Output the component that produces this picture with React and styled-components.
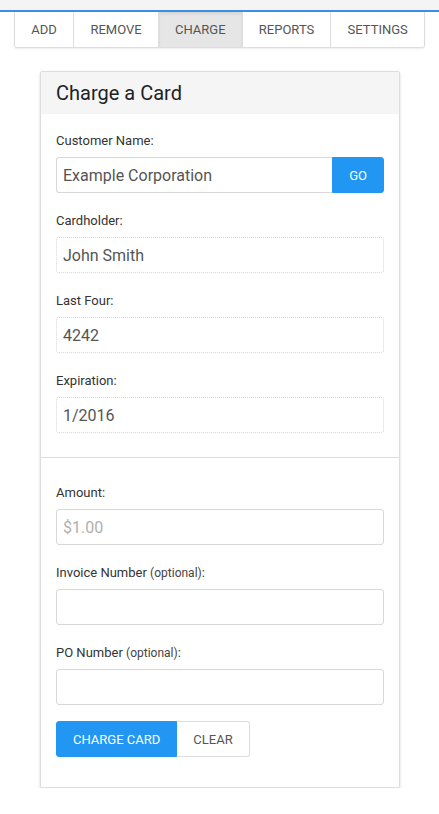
import React from 'react';
import styled, { createGlobalStyle } from 'styled-components';

const Global = createGlobalStyle`
  body {
    margin: 0;
    background: #fff;
    font-family: Roboto, "Liberation Sans", sans-serif;
    color: #333;
  }
`;

const TopBar = styled.div`
  height: 10px;
  background: #f4f4f4;
  border-bottom: 2px solid #3a8ee6;
`;

const Tabs = styled.nav`
  display: flex;
  margin: 0 14px;
  border: 1px solid #ddd;
  border-top: none;
  border-radius: 0 0 3px 3px;
  box-shadow: 0 1px 2px rgba(0, 0, 0, 0.08);
  overflow: hidden;
`;

const Tab = styled.div`
  flex: ${p => p.grow};
  height: 35px;
  display: flex;
  align-items: center;
  justify-content: center;
  font-size: 13px;
  color: #555;
  text-transform: uppercase;
  border-left: ${p => (p.first ? 'none' : '1px solid #ddd')};
  background: ${p => (p.active ? '#e6e6e6' : '#fff')};
  box-shadow: ${p => (p.active ? 'inset 0 2px 3px rgba(0,0,0,0.08)' : 'none')};
`;

const Card = styled.section`
  margin: 23px 39px 0 40px;
  border: 1px solid #ddd;
  border-radius: 2px;
  box-shadow: 0 1px 3px rgba(0, 0, 0, 0.15);
  background: #fff;
`;

const CardHeader = styled.h2`
  margin: 0;
  height: 42px;
  padding: 0 15px;
  display: flex;
  align-items: center;
  background: #f5f5f5;
  font-size: 20px;
  font-weight: 400;
  color: #222;
`;

const Section = styled.div`
  padding: ${p => p.pad};
  display: flex;
  flex-direction: column;
  gap: 20px;
`;

const Divider = styled.hr`
  margin: 0;
  border: none;
  border-top: 1px solid #ddd;
`;

const Field = styled.div`
  display: flex;
  flex-direction: column;
  gap: 9px;
`;

const Label = styled.label`
  font-size: 13px;
  line-height: 15px;
  height: 15px;
  color: #333;

  small {
    font-size: 12px;
    line-height: 15px;
    color: #444;
  }
`;

const InputRow = styled.div`
  display: flex;
`;

const Input = styled.input`
  flex: ${p => (p.joined ? '1 1 auto' : 'none')};
  min-width: 0;
  width: ${p => (p.joined ? 'auto' : '100%')};
  height: 36px;
  box-sizing: border-box;
  padding: 0 6px;
  border: 1px ${p => (p.readOnly ? 'dotted' : 'solid')} #d8d8d8;
  border-radius: ${p => (p.joined ? '3px 0 0 3px' : '3px')};
  border-right-width: ${p => (p.joined ? '0' : '1px')};
  font-family: Roboto, "Liberation Sans", sans-serif;
  font-size: 16px;
  color: #555;
  background: #fff;
  outline: none;

  &::placeholder {
    color: #b0b0b0;
  }
`;

const Button = styled.button`
  height: 36px;
  padding: 0 ${p => p.px}px;
  font-family: Roboto, "Liberation Sans", sans-serif;
  font-size: 13px;
  text-transform: uppercase;
  cursor: pointer;
  border: 1px solid ${p => (p.primary ? '#2196f3' : '#ddd')};
  border-left-width: ${p => (p.joinedLeft ? '0' : '1px')};
  background: ${p => (p.primary ? '#2196f3' : '#fff')};
  color: ${p => (p.primary ? '#fff' : '#555')};
  border-radius: ${p => p.radius};
`;

const Actions = styled.div`
  display: flex;
  margin-top: -4px;
`;

function App() {
  const tabs = [
    ['Add', 59],
    ['Remove', 85],
    ['Charge', 84],
    ['Reports', 89],
    ['Settings', 94],
  ];
  return (
    <>
      <Global />
      <TopBar />
      <Tabs>
        {tabs.map(([t, w], i) => (
          <Tab key={t} grow={w} first={i === 0} active={t === 'Charge'}>{t}</Tab>
        ))}
      </Tabs>
      <Card>
        <CardHeader>Charge a Card</CardHeader>
        <Section pad="19px 15px 24px">
          <Field>
            <Label>Customer Name:</Label>
            <InputRow>
              <Input joined defaultValue="Example Corporation" />
              <Button primary px={16} radius="0 3px 3px 0">Go</Button>
            </InputRow>
          </Field>
          <Field>
            <Label>Cardholder:</Label>
            <Input readOnly defaultValue="John Smith" />
          </Field>
          <Field>
            <Label>Last Four:</Label>
            <Input readOnly defaultValue="4242" />
          </Field>
          <Field>
            <Label>Expiration:</Label>
            <Input readOnly defaultValue="1/2016" />
          </Field>
        </Section>
        <Divider />
        <Section pad="27px 15px 30px">
          <Field>
            <Label>Amount:</Label>
            <Input placeholder="$1.00" />
          </Field>
          <Field>
            <Label>Invoice Number <small>(optional)</small>:</Label>
            <Input />
          </Field>
          <Field>
            <Label>PO Number <small>(optional)</small>:</Label>
            <Input />
          </Field>
          <Actions>
            <Button primary px={16} radius="3px 0 0 3px">Charge Card</Button>
            <Button joinedLeft px={16} radius="0 3px 3px 0">Clear</Button>
          </Actions>
        </Section>
      </Card>
    </>
  );
}

export default App;
